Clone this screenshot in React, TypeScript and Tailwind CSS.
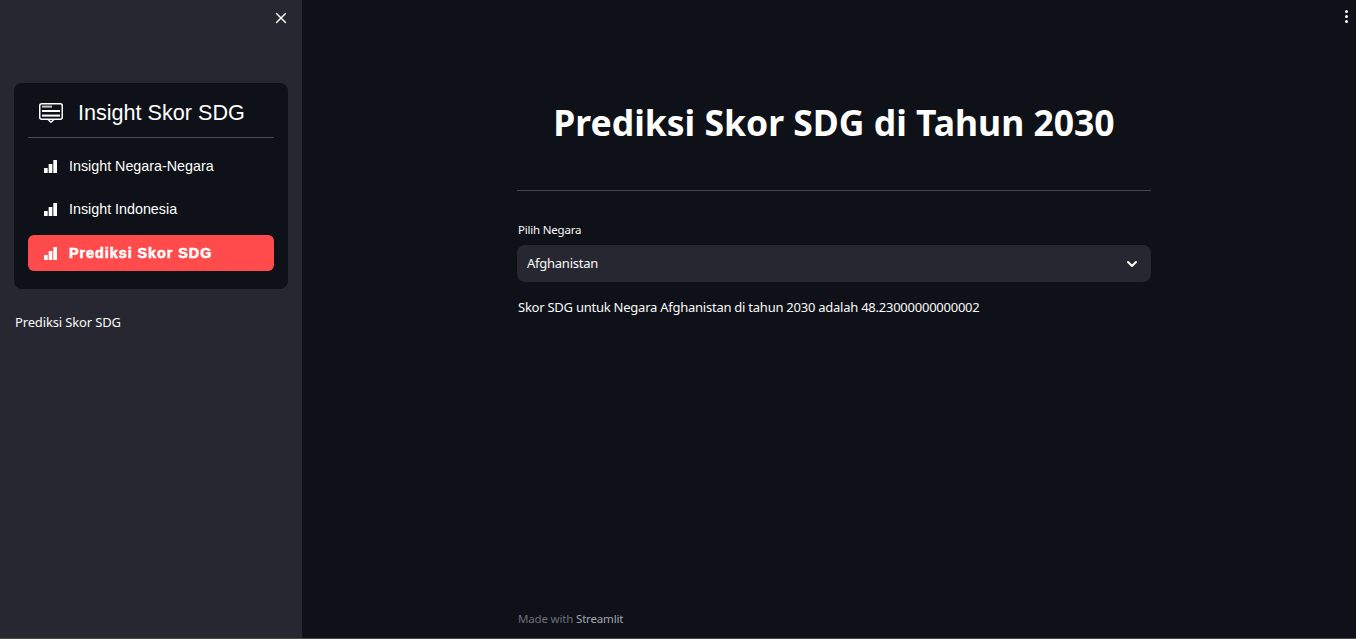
import { ChevronDown, X } from "lucide-react";

const arial = "font-['Liberation_Sans',Arial,sans-serif]";
const body = "font-['Noto_Sans',sans-serif]";

function BarsIcon() {
  return (
    <svg viewBox="0 0 13 13" className="mr-[12px] h-[13px] w-[13px] shrink-0" fill="#ffffff">
      <rect x="0" y="8" width="3.7" height="5" rx="0.5" />
      <rect x="4.65" y="4" width="3.7" height="9" rx="0.5" />
      <rect x="9.3" y="0" width="3.7" height="13" rx="0.5" />
    </svg>
  );
}

function HeaderIcon() {
  return (
    <svg viewBox="0 0 24 20" className="mr-[15px] h-5 w-6 shrink-0" fill="none" stroke="#ffffff">
      <rect x="0.75" y="0.75" width="22.5" height="15.5" rx="2" strokeWidth="1.5" />
      <path d="M9 16.5 L12 19.2 L15 16.5" strokeWidth="1.4" />
      <path d="M3 3.6 H13" strokeWidth="2" stroke="#c9c9c9" />
      <path d="M3 8 H21" strokeWidth="2" />
      <path d="M3 12.6 H21" strokeWidth="2" />
    </svg>
  );
}

function NavItem({ label, active = false }: { label: string; active?: boolean }) {
  return (
    <div className={`flex h-9 items-center rounded-md pl-4 text-white ${active ? "mt-px bg-[#ff4b4b]" : ""}`}>
      <BarsIcon />
      <span
        className={`leading-none ${
          active
            ? "text-[14.4px] font-bold tracking-[0.95px] [-webkit-text-stroke:0.55px_white]"
            : "text-[14.3px]"
        }`}
      >
        {label}
      </span>
    </div>
  );
}

export default function App() {
  return (
    <div className={`flex h-[639px] w-[1356px] overflow-hidden border-b border-[#4a4a4a] bg-[#0e1117] text-white ${body}`}>
      <aside className="flex w-[302px] shrink-0 flex-col bg-[#262730] px-[14px]">
        <div className="flex h-[83px] shrink-0 justify-end pt-[9px]">
          <X className="-mr-[2px] h-[18px] w-[18px]" strokeWidth={1.8} />
        </div>
        <div className={`rounded-lg bg-[#0e1117] px-[14px] pb-[18px] ${arial}`}>
          <div className="flex h-[55px] items-center border-b border-[#4b4c52] pl-[11px] pt-[6px]">
            <HeaderIcon />
            <span className="text-[21.6px]">Insight Skor SDG</span>
          </div>
          <div className="mt-[10px] flex flex-col gap-[7px]">
            <NavItem label="Insight Negara-Negara" />
            <NavItem label="Insight Indonesia" />
            <NavItem label="Prediksi Skor SDG" active />
          </div>
        </div>
        <p className="mt-[24px] pl-[1px] text-[13px] leading-[19px] tracking-[-0.15px] text-[#fafafa]">Prediksi Skor SDG</p>
      </aside>
      <main className="flex min-w-0 flex-1 flex-col pl-[10px]">
        <div className="flex h-[34px] shrink-0 justify-end">
          <div className="mr-[8px] mt-[10px] flex flex-col gap-[2px]">
            <span className="h-[3px] w-[3px] rounded-full bg-white" />
            <span className="h-[3px] w-[3px] rounded-full bg-white" />
            <span className="h-[3px] w-[3px] rounded-full bg-white" />
          </div>
        </div>
        <div className="mx-auto flex w-[634px] flex-1 flex-col">
          <h1 className="mt-[59px] text-center text-[35.5px] leading-[58px] font-bold text-white">
            Prediksi Skor SDG di Tahun 2030
          </h1>
          <div className="mt-[39px] h-px bg-[#46474d]" />
          <label className="ml-px mt-[31px] text-[11.5px] leading-[16px] tracking-[-0.2px] text-[#fafafa]">Pilih Negara</label>
          <div className="mt-[7px] flex h-[37px] items-center justify-between rounded-lg bg-[#262730] pl-[10px] pr-[11px] text-[13px] tracking-[-0.25px] text-[#fafafa]">
            <span>Afghanistan</span>
            <ChevronDown className="h-4 w-4" strokeWidth={3} />
          </div>
          <p className="ml-px mt-[15px] text-[13px] leading-[20px] tracking-[-0.245px] text-[#fafafa]">
            Skor SDG untuk Negara Afghanistan di tahun 2030 adalah 48.23000000000002
          </p>
          <p className="mb-[11px] ml-px mt-auto text-[11.5px] leading-[16px] tracking-[-0.17px] text-[#6b6f78]">
            Made with <span className="text-[#a3a8b0]">Streamlit</span>
          </p>
        </div>
      </main>
    </div>
  );
}
